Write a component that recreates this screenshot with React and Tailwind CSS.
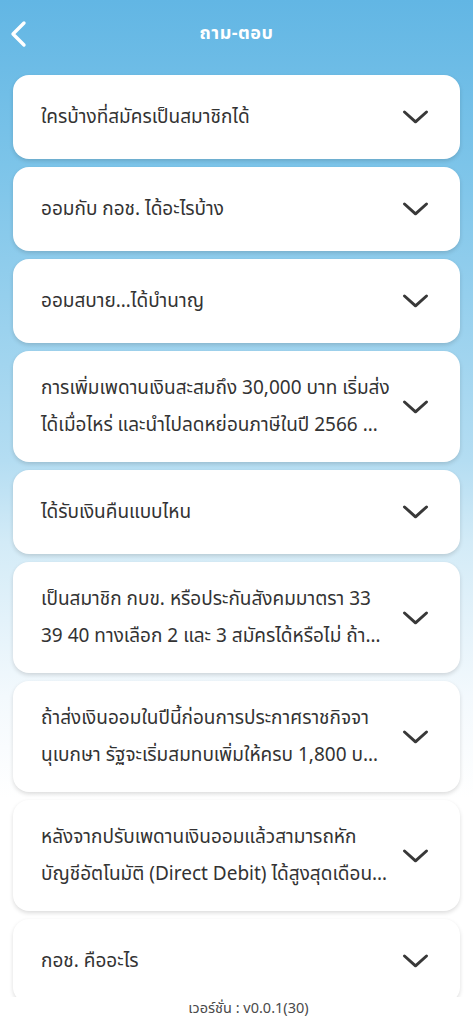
import React from "react";

const items = [
  ["ใครบ้างที่สมัครเป็นสมาชิกได้"],
  ["ออมกับ กอช. ได้อะไรบ้าง"],
  ["ออมสบาย…ได้บำนาญ"],
  ["การเพิ่มเพดานเงินสะสมถึง 30,000 บาท เริ่มส่ง", "ได้เมื่อไหร่ และนำไปลดหย่อนภาษีในปี 2566 …"],
  ["ได้รับเงินคืนแบบไหน"],
  ["เป็นสมาชิก กบข. หรือประกันสังคมมาตรา 33", "39 40 ทางเลือก 2 และ 3 สมัครได้หรือไม่ ถ้า…"],
  ["ถ้าส่งเงินออมในปีนี้ก่อนการประกาศราชกิจจา", "นุเบกษา รัฐจะเริ่มสมทบเพิ่มให้ครบ 1,800 บ…"],
  ["หลังจากปรับเพดานเงินออมแล้วสามารถหัก", "บัญชีอัตโนมัติ (Direct Debit) ได้สูงสุดเดือน…"],
  ["กอช. คืออะไร"],
];

function Chevron() {
  return (
    <svg width="28" height="16" viewBox="0 0 28 16" fill="none" className="shrink-0">
      <path d="M3.5 3 L14.5 12.8 L25.5 3" stroke="#383838" strokeWidth="3" strokeLinecap="round" strokeLinejoin="round" />
    </svg>
  );
}

export default function App() {
  return (
    <div
      className="h-[1024px] w-full flex flex-col overflow-hidden bg-[linear-gradient(180deg,#62b6e4_0%,#7cc4e9_16%,#b4ddf2_45%,#d3ebf7_53%,#f3f9fd_68%,#ffffff_78%)]"
      style={{ fontFamily: '"Noto Sans Thai", "Noto Sans", "Liberation Sans", sans-serif' }}
    >
      <header className="h-[68px] shrink-0 relative flex items-center justify-center">
        <button className="absolute left-[9px] top-[20px] p-0">
          <svg width="20" height="28" viewBox="0 0 20 28" fill="none">
            <path d="M15 3 L4 14 L15 25" stroke="#ffffff" strokeWidth="3.4" strokeLinecap="round" strokeLinejoin="round" />
          </svg>
        </button>
        <h1 className="text-white font-bold text-[18px] leading-none tracking-[0.5px]">ถาม-ตอบ</h1>
      </header>
      <main className="flex-1 overflow-hidden px-[13px] pt-[7px] flex flex-col gap-[8px]">
        {items.map((lines, i) => (
          <div
            key={i}
            className="shrink-0 min-h-[84px] bg-white rounded-[16px] shadow-[0_2px_4px_rgba(0,0,0,0.14)] pl-[28px] pr-[31px] py-[18.5px] flex items-center gap-[8px]"
          >
            <p className="flex-1 min-w-0 text-[#333333] text-[19px] leading-[37px]">
              {lines.map((l, j) => (
                <span key={j} className="block whitespace-nowrap">{l}</span>
              ))}
            </p>
            <Chevron />
          </div>
        ))}
      </main>
      <footer className="h-[27px] shrink-0 bg-white flex items-start justify-center pt-[2px] pl-[24px]">
        <span className="text-[#4a4a4a] text-[14.5px] leading-[20px]">เวอร์ชั่น : v0.0.1(30)</span>
      </footer>
    </div>
  );
}
